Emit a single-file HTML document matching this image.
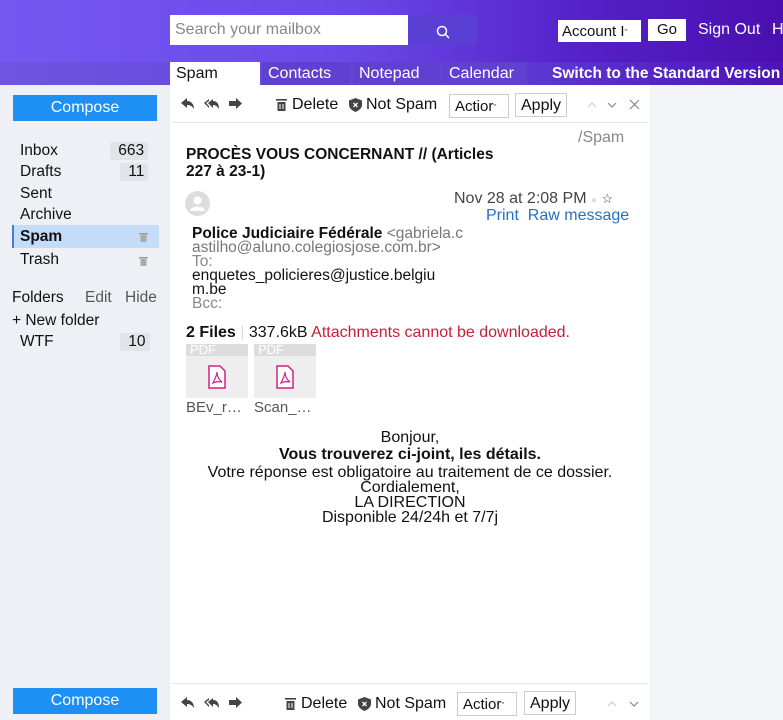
<!DOCTYPE html>
<html><head><meta charset="utf-8"><style>
*{margin:0;padding:0;box-sizing:border-box}
body{width:783px;height:720px;overflow:hidden;font-family:"Liberation Sans",sans-serif;background:#eef0f5;position:relative;color:#111}
.a{position:absolute;white-space:nowrap}
#hdr{left:0;top:0;width:783px;height:62px;background:linear-gradient(90deg,#7558f2 0%,#6a48e8 45%,#5520c8 75%,#4a0fb0 100%)}
#tabs{left:0;top:62px;width:783px;height:23px;background:linear-gradient(90deg,#6e55e0,#6040d8 60%,#4d14b8)}
.tab{top:62px;height:23px;background:#5f40d0;color:#fff;font-size:16px;padding:3px 6px}
.btn{background:#fff;border:1px solid #ccc;font-size:15px;padding:3px 5px}
.cmp{left:13px;width:144px;height:26px;background:#1e90f5;color:#fff;text-align:center;font-size:16px;line-height:26px}
.nav{left:20px;font-size:15.5px}
.cnt{background:#e2e4ea;font-size:15.5px;padding:0 4px;border-radius:2px}
.tb{font-size:16px;color:#111}
</style></head><body>
<div id="hdr" class="a"></div>
<div id="tabs" class="a"></div>
<div class="a" style="left:170px;top:15px;width:238px;height:30px;background:#fff;color:#888;font-size:16px;padding:6px 5px">Search your mailbox</div>
<div class="a" style="left:408px;top:15px;width:69px;height:30px;background:#5a3fd4"></div>
<svg class="a" style="left:436px;top:25px" width="14" height="14"><circle cx="6" cy="6" r="4.5" stroke="#fff" stroke-width="1.5" fill="none"/><line x1="9.5" y1="9.5" x2="13" y2="13" stroke="#fff" stroke-width="1.5"/></svg>
<div class="a" style="left:558px;top:20px;width:83px;height:22px;background:#fff;font-size:15px;padding:3px 4px">Account I<span style="font-size:9px">ˇ</span></div>
<div class="a" style="left:648px;top:19px;width:38px;height:22px;background:#fff;font-size:15px;padding:2px 9px">Go</div>
<div class="a" style="left:698px;top:21px;color:#fff;font-size:16px">Sign Out</div>
<div class="a" style="left:772px;top:21px;color:#fff;font-size:16px">H</div>
<div class="a tab" style="left:170px;width:90px;background:#fff;color:#111">Spam</div>
<div class="a tab" style="left:262px;width:88px">Contacts</div>
<div class="a tab" style="left:353px;width:87px">Notepad</div>
<div class="a tab" style="left:443px;width:84px">Calendar</div>
<div class="a" style="left:552px;top:65px;color:#fff;font-size:15.5px;font-weight:bold">Switch to the Standard Version</div>
<div class="a" style="left:650px;top:85px;width:133px;height:635px;background:#f4f5f8"></div>
<div class="a" style="left:170px;top:85px;width:480px;height:635px;background:#fff"></div>
<div class="a" style="left:172px;top:122px;width:476px;height:1px;background:#e6e6ea"></div>
<div class="a" style="left:172px;top:683px;width:476px;height:1px;background:#e6e6ea"></div>

<div class="a cmp" style="top:95px">Compose</div>
<div class="a cmp" style="top:688px">Compose</div>
<div class="a nav" style="top:142px">Inbox</div><div class="a cnt" style="left:110px;top:142px">&nbsp;663</div>
<div class="a nav" style="top:163px">Drafts</div><div class="a cnt" style="left:120px;top:163px">&nbsp;11</div>
<div class="a nav" style="top:185px">Sent</div>
<div class="a nav" style="top:206px">Archive</div>
<div class="a" style="left:12px;top:225px;width:147px;height:23px;background:#c5dcf8;border-left:2px solid #4a7ac8"></div>
<div class="a nav" style="top:228px;font-weight:bold">Spam</div>
<svg class="a" style="left:139px;top:232px" width="9" height="10"><rect x="0" y="1" width="9" height="1.5" fill="#999"/><rect x="1.5" y="3" width="6" height="7" fill="#aaa"/></svg>
<div class="a nav" style="top:251px">Trash</div>
<svg class="a" style="left:139px;top:256px" width="9" height="10"><rect x="0" y="1" width="9" height="1.5" fill="#999"/><rect x="1.5" y="3" width="6" height="7" fill="#aaa"/></svg>
<div class="a" style="left:12px;top:289px;font-size:15.5px">Folders</div>
<div class="a" style="left:85px;top:289px;font-size:15.5px;color:#555">Edit</div>
<div class="a" style="left:125px;top:289px;font-size:15.5px;color:#555">Hide</div>
<div class="a" style="left:12px;top:312px;font-size:15.5px">+ New folder</div>
<div class="a nav" style="top:333px">WTF</div><div class="a cnt" style="left:120px;top:333px">&nbsp;10</div>

<!-- toolbar top -->
<svg class="a" style="left:180px;top:97px" width="70" height="14" fill="#444">
<path d="M1 6 L7 1 V4 C11 4 14 7 14 12 C12 9 10 8 7 8 V11 Z"/>
<path d="M24 6 L29 2 V4 L26 6 L29 9 V11 Z M28 6 L33 2 V4 C37 4 39 7 39 12 C37 9 35 8 33 8 V11 Z"/>
<path d="M49 4 H56 V1 L62 6.5 L56 12 V9 H49 Z"/>
</svg>
<svg class="a" style="left:276px;top:99px" width="11" height="12" fill="#444"><rect x="0" y="0" width="11" height="1.6"/><rect x="1.5" y="3" width="8" height="9"/><rect x="3.5" y="5" width="1" height="5" fill="#fff"/><rect x="6.5" y="5" width="1" height="5" fill="#fff"/></svg>
<div class="a tb" style="left:292px;top:96px">Delete</div>
<svg class="a" style="left:349px;top:98px" width="13" height="14"><path d="M6.5 0 L13 2.5 V7 C13 10 10 12.5 6.5 14 C3 12.5 0 10 0 7 V2.5 Z" fill="#444"/><path d="M4.5 5 L8.5 9 M8.5 5 L4.5 9" stroke="#fff" stroke-width="1.3"/></svg>
<div class="a tb" style="left:366px;top:96px">Not Spam</div>
<div class="a btn" style="left:449px;top:94px;width:60px;height:24px">Actior<span style="font-size:9px">ˇ</span></div>
<div class="a btn" style="left:515px;top:93px;width:52px;height:24px;font-size:16px">Apply</div>
<svg class="a" style="left:586px;top:99px" width="56" height="12" fill="none" stroke-width="1.2"><path d="M2 8 L6 4 L10 8" stroke="#ccc"/><path d="M22 4 L26 8 L30 4" stroke="#888"/><path d="M44 1 L53 10 M53 1 L44 10" stroke="#888"/></svg>

<div class="a" style="left:578px;top:129px;color:#888;font-size:16px">/Spam</div>
<div class="a" style="left:186px;top:146px;font-size:15.5px;font-weight:bold;line-height:17px">PROCÈS VOUS CONCERNANT // (Articles<br>227 à 23-1)</div>
<svg class="a" style="left:185px;top:191px" width="25" height="25"><circle cx="12.5" cy="12.5" r="12.5" fill="#ddd"/><circle cx="12.5" cy="9.5" r="4" fill="#fff"/><path d="M5 20 C6 14 19 14 20 20 Z" fill="#fff"/></svg>
<div class="a" style="left:454px;top:190px;font-size:16px;color:#444">Nov 28 at 2:08 PM <span style="color:#ddd;font-size:10px">●</span> <span style="font-size:13px">☆</span></div>
<div class="a" style="left:486px;top:207px;font-size:16px;color:#2a6fc0">Print&nbsp; Raw message</div>
<div class="a" style="left:192px;top:227px;font-size:15.5px;line-height:14px"><b>Police Judiciaire Fédérale</b> <span style="color:#777">&lt;gabriela.c</span><br><span style="color:#777">astilho@aluno.colegiosjose.com.br&gt;</span><br><span style="color:#888">To:</span><br>enquetes_policieres@justice.belgiu<br>m.be<br><span style="color:#888">Bcc:</span></div>
<div class="a" style="left:186px;top:324px;font-size:16px"><b>2 Files</b> <span style="color:#ddd">|</span> 337.6kB <span style="color:#c8203a">Attachments cannot be downloaded.</span></div>
<div class="a" style="left:186px;top:344px;width:62px;height:54px;background:#eeeeee"><div style="background:#ddd;color:#fff;font-size:13px;height:12px;line-height:12px;padding-left:4px">PDF</div></div>
<div class="a" style="left:254px;top:344px;width:62px;height:54px;background:#eeeeee"><div style="background:#ddd;color:#fff;font-size:13px;height:12px;line-height:12px;padding-left:4px">PDF</div></div>
<svg class="a" style="left:207px;top:365px" width="20" height="24"><path d="M2 1 H13 L18 6 V23 H2 Z" fill="#fff" stroke="#d0208a" stroke-width="1.5"/><path d="M6 18 C8 14 10 10 10 7 C10 11 12 15 15 17 C11 16 8 17 6 18 Z" fill="none" stroke="#d0208a" stroke-width="1.2"/></svg>
<svg class="a" style="left:275px;top:365px" width="20" height="24"><path d="M2 1 H13 L18 6 V23 H2 Z" fill="#fff" stroke="#d0208a" stroke-width="1.5"/><path d="M6 18 C8 14 10 10 10 7 C10 11 12 15 15 17 C11 16 8 17 6 18 Z" fill="none" stroke="#d0208a" stroke-width="1.2"/></svg>
<div class="a" style="left:186px;top:399px;font-size:15px;color:#555">BEv_r…</div>
<div class="a" style="left:254px;top:399px;font-size:15px;color:#555">Scan_…</div>

<div class="a" style="left:170px;top:430px;width:480px;text-align:center;font-size:16px;line-height:15px">Bonjour,<br><b style="line-height:20px">Vous trouverez ci-joint, les détails.</b><br>Votre réponse est obligatoire au traitement de ce dossier.<br>Cordialement,<br><b style="font-weight:normal">LA DIRECTION</b><br>Disponible 24/24h et 7/7j</div>

<!-- toolbar bottom -->
<svg class="a" style="left:180px;top:696px" width="70" height="14" fill="#444">
<path d="M1 6 L7 1 V4 C11 4 14 7 14 12 C12 9 10 8 7 8 V11 Z"/>
<path d="M24 6 L29 2 V4 L26 6 L29 9 V11 Z M28 6 L33 2 V4 C37 4 39 7 39 12 C37 9 35 8 33 8 V11 Z"/>
<path d="M49 4 H56 V1 L62 6.5 L56 12 V9 H49 Z"/>
</svg>
<svg class="a" style="left:285px;top:698px" width="11" height="12" fill="#444"><rect x="0" y="0" width="11" height="1.6"/><rect x="1.5" y="3" width="8" height="9"/><rect x="3.5" y="5" width="1" height="5" fill="#fff"/><rect x="6.5" y="5" width="1" height="5" fill="#fff"/></svg>
<div class="a tb" style="left:301px;top:695px">Delete</div>
<svg class="a" style="left:358px;top:697px" width="13" height="14"><path d="M6.5 0 L13 2.5 V7 C13 10 10 12.5 6.5 14 C3 12.5 0 10 0 7 V2.5 Z" fill="#444"/><path d="M4.5 5 L8.5 9 M8.5 5 L4.5 9" stroke="#fff" stroke-width="1.3"/></svg>
<div class="a tb" style="left:375px;top:695px">Not Spam</div>
<div class="a btn" style="left:457px;top:692px;width:60px;height:24px">Actior<span style="font-size:9px">ˇ</span></div>
<div class="a btn" style="left:524px;top:691px;width:52px;height:24px;font-size:16px">Apply</div>
<svg class="a" style="left:606px;top:698px" width="36" height="12" fill="none" stroke-width="1.2"><path d="M2 8 L6 4 L10 8" stroke="#ccc"/><path d="M24 4 L28 8 L32 4" stroke="#888"/></svg>
</body></html>
